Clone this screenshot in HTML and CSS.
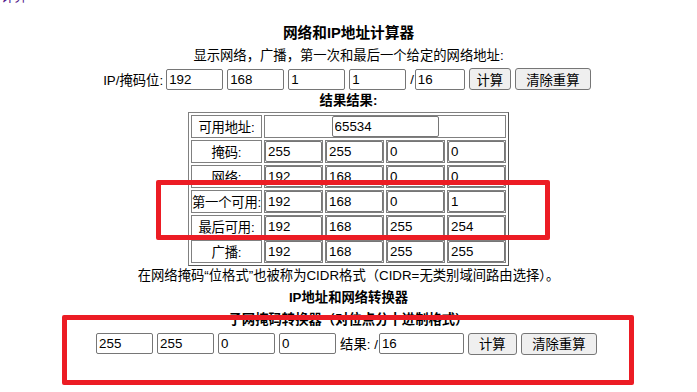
FILE: index.html
```html
<!DOCTYPE html>
<html lang="zh-CN">
<head>
    <meta charset="UTF-8">
    <meta name="viewport" content="width=device-width, initial-scale=1.0">
    <title>网络和IP地址计算器</title>
    <link rel="stylesheet" href="styles.css">
</head>
<body>
    <!-- кусок предыдущего блока, обрезан сверху -->
    <div class="prev"><span>计算</span></div>

    <div class="calc">
        <h1 class="title">网络和IP地址计算器</h1>
        <p class="line">显示网络，广播，第一次和最后一个给定的网络地址:</p>

        <form class="row row-ip">
            <span class="label">IP/掩码位:</span>
            <input class="oct" type="text" value="192">
            <input class="oct" type="text" value="168">
            <input class="oct" type="text" value="1">
            <input class="oct" type="text" value="1">
            <span class="slash">/</span>
            <input class="bits" type="text" value="16">
            <button type="button" class="btn btn-calc">计算</button>
            <button type="button" class="btn btn-reset">清除重算</button>
        </form>

        <p class="heading heading-result">结果结果:</p>

        <table class="result">
            <tr>
                <td class="name">可用地址:</td>
                <td colspan="4"><input class="count" type="text" value="65534"></td>
            </tr>
            <tr>
                <td class="name">掩码:</td>
                <td><input class="cell" type="text" value="255"></td>
                <td><input class="cell" type="text" value="255"></td>
                <td><input class="cell" type="text" value="0"></td>
                <td><input class="cell" type="text" value="0"></td>
            </tr>
            <tr>
                <td class="name">网络:</td>
                <td><input class="cell" type="text" value="192"></td>
                <td><input class="cell" type="text" value="168"></td>
                <td><input class="cell" type="text" value="0"></td>
                <td><input class="cell" type="text" value="0"></td>
            </tr>
            <tr>
                <td class="name">第一个可用:</td>
                <td><input class="cell" type="text" value="192"></td>
                <td><input class="cell" type="text" value="168"></td>
                <td><input class="cell" type="text" value="0"></td>
                <td><input class="cell" type="text" value="1"></td>
            </tr>
            <tr>
                <td class="name">最后可用:</td>
                <td><input class="cell" type="text" value="192"></td>
                <td><input class="cell" type="text" value="168"></td>
                <td><input class="cell" type="text" value="255"></td>
                <td><input class="cell" type="text" value="254"></td>
            </tr>
            <tr>
                <td class="name">广播:</td>
                <td><input class="cell" type="text" value="192"></td>
                <td><input class="cell" type="text" value="168"></td>
                <td><input class="cell" type="text" value="255"></td>
                <td><input class="cell" type="text" value="255"></td>
            </tr>
        </table>

        <p class="line line-cidr">在网络掩码“位格式”也被称为CIDR格式（CIDR=无类别域间路由选择）。</p>
        <p class="heading heading-conv">IP地址和网络转换器</p>
        <p class="heading heading-mask">子网掩码转换器（对位点分十进制格式）</p>

        <form class="row row-mask">
            <input class="oct" type="text" value="255">
            <input class="oct" type="text" value="255">
            <input class="oct" type="text" value="0">
            <input class="oct" type="text" value="0">
            <span class="label">结果: /</span>
            <input class="bits-out" type="text" value="16">
            <button type="button" class="btn btn-calc2">计算</button>
            <button type="button" class="btn btn-reset">清除重算</button>
        </form>
    </div>

    <!-- красные рамки-пометки поверх скриншота -->
    <div class="mark mark-first"></div>
    <div class="mark mark-convert"></div>
</body>
</html>
```

FILE: styles.css
```css
* {
    box-sizing: border-box;
}

body {
    margin: 0;
    font-family: "Liberation Sans", "Noto Sans CJK SC", sans-serif;
    font-size: 13.33px;
    color: #000;
    background: #fff;
    position: relative;
    min-height: 392px;
}

.prev {
    height: 3px;
    overflow: hidden;
    display: flex;
    align-items: flex-end;
    padding-left: 1px;
    color: #551a8b;
    line-height: 12px;
}

.calc {
    text-align: center;
}

.title {
    font-size: 14.67px;
    font-weight: bold;
    line-height: 22px;
    margin: 19px 0 0;
}

.line {
    margin: 0;
    line-height: 23px;
}

.heading {
    margin: 0;
    font-weight: bold;
}

.heading-result {
    line-height: 20px;
}

.row {
    display: flex;
    justify-content: center;
    align-items: center;
    gap: 4px;
    margin: 0;
}

.row-ip {
    height: 24px;
    padding-right: 3px;
}

.row-mask {
    height: 27px;
    padding-right: 4px;
}

input {
    font-family: "Liberation Sans", "Noto Sans CJK SC", sans-serif;
    font-size: 13.33px;
    color: #000;
    border: 1px solid #767676;
    border-radius: 2px;
    padding: 1px 2px;
    height: 21px;
    margin: 0;
    background: #fff;
}

.oct {
    width: 57px;
}

.row-ip .label {
    margin-right: -1px;
}

.slash {
    margin: 0 -3px 0 0;
}

.bits {
    width: 50px;
}

.bits-out {
    width: 85px;
    margin-left: -3px;
}

.btn {
    font-family: "Liberation Sans", "Noto Sans CJK SC", sans-serif;
    font-size: 13.33px;
    color: #000;
    background: #efefef;
    border: 1px solid #767676;
    border-radius: 3px;
    height: 22px;
    padding: 0 6px;
    margin: 0;
}

.btn-calc {
    width: 42px;
}

.btn-calc2 {
    width: 49px;
}

.btn-reset {
    width: 76px;
}

.result {
    margin: 1px auto 0;
    border-collapse: separate;
    border-spacing: 2px;
    border: 1px solid #808080;
    border-right-color: #555;
    border-bottom-color: #555;
}

.result td {
    border: 1px solid #808080;
    padding: 0;
    height: 23px;
}

.result td.name {
    white-space: nowrap;
    text-align: center;
    padding: 0;
    letter-spacing: -0.2px;
}

.cell {
    display: block;
    width: 57px;
}

.count {
    display: block;
    width: 107px;
    margin: 0 auto;
}

.line-cidr {
    line-height: 20px;
}

.heading-conv {
    line-height: 24px;
}

.heading-mask {
    line-height: 20px;
}

/* пометки */
.mark {
    position: absolute;
    border: 5px solid #ec1c24;
    border-radius: 2px;
}

.mark-first {
    left: 156px;
    top: 180px;
    width: 394px;
    height: 60px;
}

.mark-convert {
    left: 62px;
    top: 315px;
    width: 572px;
    height: 70px;
}
```
